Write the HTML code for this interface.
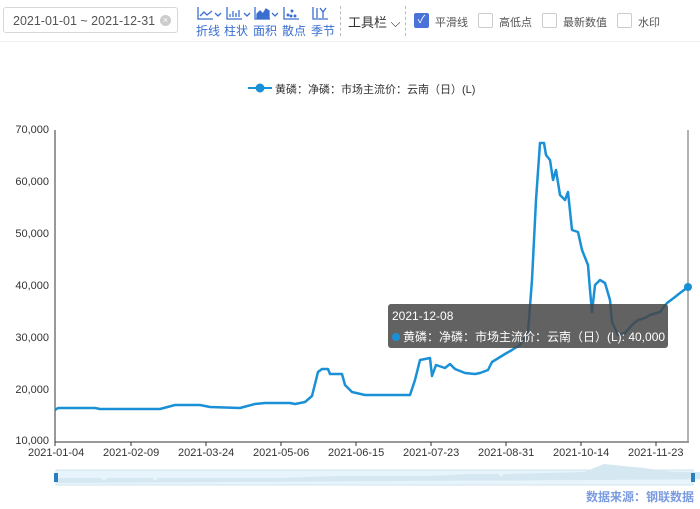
<!DOCTYPE html>
<html><head><meta charset="utf-8"><style>
body{margin:0;width:700px;height:509px;background:#fff;font-family:"Liberation Sans","Noto Sans CJK SC",sans-serif;position:relative;overflow:hidden}
.a{position:absolute}
.date{left:3px;top:7px;width:175px;height:26px;border:1px solid #d8d8d8;border-radius:3px;font-size:12.5px;color:#555;line-height:26px;box-sizing:border-box;padding-left:9px}
.tb{top:22px;font-size:12px;color:#3a6fd0}
.cb{width:13px;height:13px;border:1px solid #ccc;border-radius:2px;top:13px}
.lbl{font-size:11px;color:#555;top:14px}
.ax{font-size:11px;color:#333}
</style></head><body>
<div class="a date">2021-01-01 ~ 2021-12-31<span class="a" style="left:156px;top:7px;width:11px;height:11px;border-radius:50%;background:#ccc;color:#fff;font-size:9px;line-height:11px;text-align:center">×</span></div>
<svg class="a" style="left:195px;top:4px" width="140" height="18" fill="none" stroke="#3a6fd0" stroke-width="1.3">
<path d="M3 3v12h15M5 12l4-4 3 3 5-4"/><path d="M20 9l3 3 3-3"/>
<path d="M32 3v12h15M35 13v-3M38 13v-6M41 13v-4M44 13v-7"/><path d="M49 9l3 3 3-3"/>
<path d="M60 3v12h15"/><path d="M62 14v-4l3-3 3 3 3-5 3 2v7z" fill="#3a6fd0"/><path d="M77 9l3 3 3-3"/>
<path d="M89 3v12h15"/><circle cx="93" cy="11" r=".8"/><circle cx="97" cy="7" r=".8"/><circle cx="100" cy="12" r=".8"/><circle cx="96" cy="12" r=".8"/>
<path d="M118 3v12h15M122 4v10M125 4l3 4 3-4M128 8v6"/>
</svg>
<div class="a tb" style="left:196px">折线</div><div class="a tb" style="left:224px">柱状</div><div class="a tb" style="left:253px">面积</div><div class="a tb" style="left:282px">散点</div><div class="a tb" style="left:311px">季节</div>
<div class="a" style="left:340px;top:6px;height:30px;border-left:1px dashed #bbb"></div>
<div class="a" style="left:348px;top:12px;font-size:13px;color:#333">工具栏 ⌵</div>
<div class="a" style="left:405px;top:6px;height:30px;border-left:1px dashed #bbb"></div>
<div class="a cb" style="left:414px;background:#4a73d9;border-color:#4a73d9;color:#fff;font-size:11px;line-height:13px;text-align:center">✓</div><div class="a lbl" style="left:435px">平滑线</div>
<div class="a cb" style="left:478px"></div><div class="a lbl" style="left:499px">高低点</div>
<div class="a cb" style="left:542px"></div><div class="a lbl" style="left:563px">最新数值</div>
<div class="a cb" style="left:617px"></div><div class="a lbl" style="left:638px">水印</div>
<div class="a" style="left:0;top:41px;width:700px;border-top:1px solid #eee"></div>
<svg class="a" style="left:248px;top:82px" width="24" height="12"><path d="M0 6h24" stroke="#1a90d6" stroke-width="2"/><circle cx="12" cy="6" r="4.5" fill="#1a90d6"/></svg>
<div class="a" style="left:275px;top:81px;font-size:11px;color:#333">黄磷：净磷：市场主流价：云南（日）(L)</div>
<div class="a ax" style="right:651px;top:124px;text-align:right">70,000</div>
<div class="a ax" style="right:651px;top:176px">60,000</div>
<div class="a ax" style="right:651px;top:228px">50,000</div>
<div class="a ax" style="right:651px;top:280px">40,000</div>
<div class="a ax" style="right:651px;top:332px">30,000</div>
<div class="a ax" style="right:651px;top:384px">20,000</div>
<div class="a ax" style="right:651px;top:435px">10,000</div>
<svg class="a" style="left:0;top:0" width="700" height="509">
<path d="M55 130v312h634" stroke="#333" fill="none"/>
<path d="M55 442v4M131 442v4M206 442v4M281 442v4M356 442v4M431 442v4M506 442v4M581 442v4M656 442v4" stroke="#333"/>
<path d="M688 130v312" stroke="#999" stroke-width="1.5"/>
<polyline fill="none" stroke="#1a90d6" stroke-width="2.5" stroke-linejoin="round" points="55,410 58,408 95,408 100,409 160,409 175,405 200,405 210,407 240,408 255,404 265,403 290,403 295,404 305,402 312,396 318,372 322,369 328,369 330,374 342,374 345,385 352,392 365,395 380,395 410,395 415,380 420,360 430,358 432,376 436,365 445,368 450,364 455,369 465,373 475,374 480,373 488,370 492,362 505,354 512,350 520,345 528,332 532,280 536,200 540,143 544,143 546,155 550,160 553,180 556,170 560,195 565,200 568,192 572,230 578,232 582,250 588,265 590,290 592,312 595,285 600,280 605,283 610,300 612,322 618,335 625,333 632,325 638,320 645,318 650,315 660,312 667,303 675,297 680,293 688,287"/>
<circle cx="688" cy="287" r="4" fill="#1a90d6"/>
<rect x="56" y="470" width="637" height="15" fill="#e8f4fb" stroke="#cfe3ee"/>
<path d="M56 483l0-5 45 0 3 3 3-3 45 0 3 3 3-3 120 0 60-2 90 0 40-2 30 0 3 3 3-3 80-2 20-8 40 4 30 4 40 0 48-2v9z" fill="#d5e8f2"/>
<rect x="54" y="473" width="4" height="9" fill="#2a7fc1"/><rect x="691" y="473" width="4" height="9" fill="#2a7fc1"/>
</svg>
<div class="a ax" style="left:28px;top:447px">2021-01-04</div>
<div class="a ax" style="left:103px;top:447px">2021-02-09</div>
<div class="a ax" style="left:178px;top:447px">2021-03-24</div>
<div class="a ax" style="left:253px;top:447px">2021-05-06</div>
<div class="a ax" style="left:328px;top:447px">2021-06-15</div>
<div class="a ax" style="left:403px;top:447px">2021-07-23</div>
<div class="a ax" style="left:478px;top:447px">2021-08-31</div>
<div class="a ax" style="left:553px;top:447px">2021-10-14</div>
<div class="a ax" style="left:628px;top:447px">2021-11-23</div>
<div class="a" style="left:586px;top:488px;font-size:12px;color:#7a9be0;font-weight:bold">数据来源：钢联数据</div>
<div class="a" style="left:388px;top:304px;width:280px;height:44px;background:rgba(70,70,70,.85);border-radius:3px;color:#fff;font-size:12px">
<div class="a" style="left:4px;top:5px">2021-12-08</div>
<div class="a" style="left:4px;top:24px;white-space:nowrap"><span style="display:inline-block;width:8px;height:8px;border-radius:50%;background:#1a90d6;margin-right:3px"></span>黄磷：净磷：市场主流价：云南（日）(L): 40,000</div>
</div>
</body></html>
